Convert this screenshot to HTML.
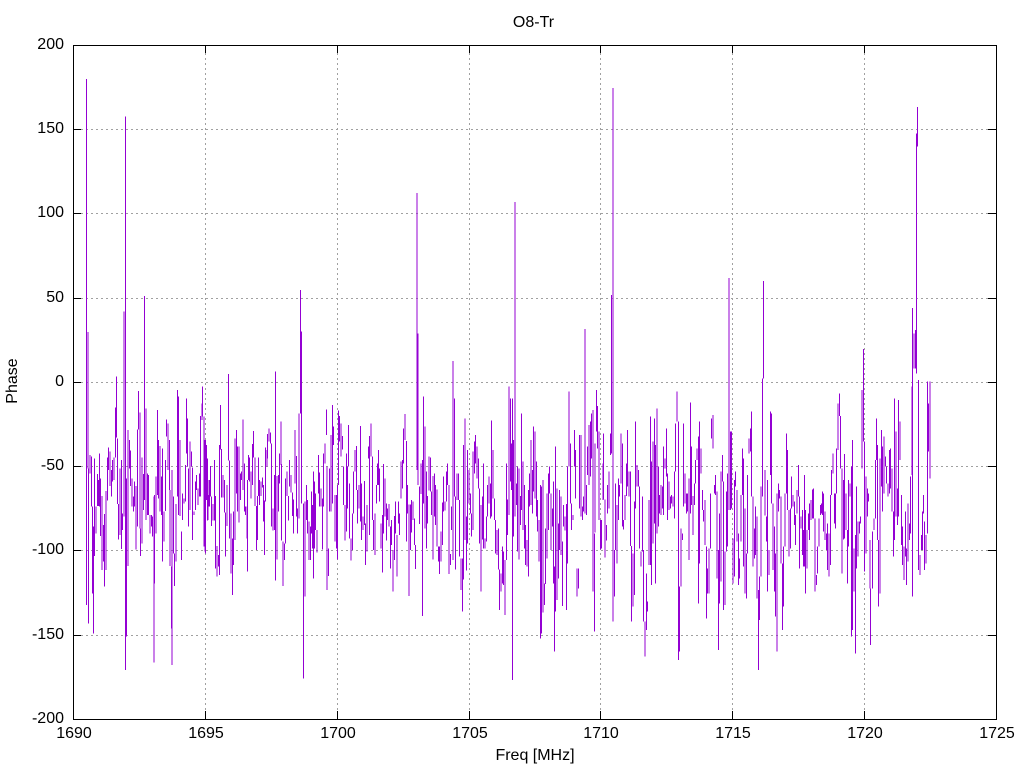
<!DOCTYPE html>
<html>
<head>
<meta charset="utf-8">
<title>O8-Tr</title>
<style>
html,body{margin:0;padding:0;background:#fff;width:1024px;height:768px;overflow:hidden}
svg{display:block}
text{font-family:"Liberation Sans",sans-serif;font-size:16px;fill:#000}
.d{fill:none;stroke:#9400d3;stroke-width:1.15;vector-effect:non-scaling-stroke}
</style>
</head>
<body>
<svg width="1024" height="768" viewBox="0 0 1024 768" xmlns="http://www.w3.org/2000/svg">
<rect width="1024" height="768" fill="#fff"/>
<g stroke="#a0a0a0" stroke-width="1" stroke-dasharray="2 3" fill="none" shape-rendering="crispEdges">
<path d="M81 129.5H988M81 213.5H988M81 298.5H988M81 382.5H988M81 466.5H988M81 550.5H988M81 635.5H988"/>
<path d="M205.5 53V711M337.5 53V711M469.5 53V711M600.5 53V711M732.5 53V711M864.5 53V711"/>
</g>
<g shape-rendering="crispEdges">
<g transform="translate(80,380) scale(.33333)"><path class="d" d="M19 -903V675M24 -144V265M26 265V730M30 225V280M34 230V380M38 380V640M40 440V760M44 235V528M48 380V460M52 282V378M56 300V378M58 220V380M62 295V468M66 348V570M70 435V545M74 402V620M78 333V570M82 232V362M86 202V270M90 215V318M94 270V350M98 240V305M102 232V300M106 82V232M110 -10V172M112 175V372M116 372V478M120 265V465M124 240V507M128 400V450M132 -205V410M136 -790V870M140 295V770M144 150V558M148 180V265M152 212V318M156 295V380M160 350V395M164 305V380M168 318V508M172 148V440M176 33V148M180 98V445M182 445V528M186 232V490M190 282V390M194 -252V360M198 85V420M202 280V405M206 285V405M210 405V460M214 405V440M218 410V470M222 350V848M224 345V610M228 290V460M232 90V345M236 180V355M240 198V395M244 290V405M248 205V545M252 395V485M256 240V393M260 118V170M264 130V270M268 180V330M270 330V558M274 560V745M276 270V855M280 350V520M284 520V618M288 372V545M292 30V350M296 50V405M300 180V408M304 455V540M308 340V420M312 355V370M316 255V365M320 55V220M322 115V260M326 265V440M330 185V390M334 215V260M338 262V480M342 395V405M346 305V390M350 285V330M354 325V375M358 280V350M362 108V350M366 70V120M368 20V110M372 110V500M376 180V520M380 235V360M384 345V420M388 300V380"/></g>
<g transform="translate(205,370) scale(.33333)"><path class="d" d="M0 210V545M4 225V265M8 265V452M12 330V410M16 288V380M20 380V468M24 402V452M28 270V452M32 378V595M36 528V620M40 555V590M44 225V615M46 105V238M50 237V382M54 315V382M58 330V428M62 428V560M66 345V468M70 12V272M74 272V505M78 430V610M82 505V675M86 425V585M90 205V510M94 180V370M98 230V425M102 230V458M106 310V390M110 305V330M114 148V360M118 280V425M122 410V435M126 410V505M128 330V605M130 255V330M134 262V335M138 305V385M142 222V345M146 183V262M150 262V408M154 408V540M158 378V510M160 262V378M164 330V405M168 335V378M172 322V352M176 345V455M178 392V555M182 232V395M186 240V290M188 192V265M192 175V215M196 188V220M200 220V470M204 415V482M208 315V480M212 5V632M216 318V568M220 315V425M224 250V340M228 155V285M230 282V512M234 515V648M238 520V570M242 325V520M246 305V378M250 378V452M254 270V350M258 315V368M262 368V438M266 388V490M270 180V340M274 258V440M278 415V490M282 130V445M286 -240V130M290 -115V400M296 400V925M300 395V680M304 345V450M308 390V490M312 455V570M316 470V570M320 365V490M322 405V535M326 305V625M328 335V535M332 370V480M336 480V548M340 255V370M344 308V410M348 355V410M352 385V538M356 250V410M360 220V280M364 118V195M366 290V660M370 535V618M374 295V425M378 195V425M382 105V400M386 170V225M390 375V515"/></g>
<g transform="translate(335,370) scale(.33333)"><path class="d" d="M0 385V455M4 375V535M8 345V568M10 122V345M14 138V215M18 160V260M22 198V238M26 290V405M30 405V512M34 250V485M38 290V415M40 165V290M44 340V505M48 505V572M52 430V540M56 305V430M60 240V305M64 228V360M68 360V460M72 345V415M76 168V455M80 340V510M84 440V480M88 333V465M92 460V585M96 405V545M100 230V265M104 198V495M108 160V260M112 260V450M116 450V540M120 430V555M124 345V400M128 280V345M130 240V345M134 295V395M138 460V535M142 435V608M146 282V490M150 325V440M154 400V512M158 415V450M162 402V470M166 470V595M170 450V525M174 540V665M178 438V570M182 395V490M186 495V620M190 395V460M194 430V495M198 275V385M202 270V355M206 175V280M210 132V210M214 213V515M218 345V430M222 403V678M226 403V540M230 390V488M234 395V450M238 445V525M242 525V597M246 -531V300M249 -110V345M254 350V462M258 280V372M262 270V738M266 80V400M270 170V475M274 305V535M278 378V460M282 260V362M286 262V365M290 365V435M294 318V568M298 310V440M302 345V465M306 358V530M310 530V575M314 530V612M318 485V575M322 397V525M326 320V425M330 395V422M334 305V395M338 280V345M342 345V612M346 552V585M350 410V480M354 -27V570M358 85V380M362 380V598M366 310V390M370 310V390M374 390V560M378 565V660M382 565V725M386 225V628M390 145V510"/></g>
<g transform="translate(465,370) scale(.33333)"><path class="d" d="M0 215V440M4 440V602M8 240V520M12 300V400M16 370V430M20 430V500M24 245V480M28 215V310M32 195V280M36 230V325M40 265V355M44 355V520M48 405V665M52 380V508M56 280V535M60 505V535M64 440V515M68 345V440M72 320V400M76 340V445M80 152V440M84 240V385M88 385V450M92 450V550M96 480V555M100 475V598M104 598V720M108 610V665M112 530V640M116 545V645M120 570V735M124 280V570M128 388V495M132 50V435M136 85V335M140 220V360M142 85V930M146 210V500M150 -504V440M154 340V405M158 290V545M162 295V568M166 378V465M170 130V420M174 275V480M178 345V535M182 465V585M186 510V590M190 360V620M194 310V410M198 210V405M202 300V430M206 170V365M210 185V385M214 275V440M218 390V485M222 450V575M226 345V805M230 350V790M234 330V728M238 640V705M242 475V642M246 370V565M250 310V480M254 290V370M258 370V540M262 415V470M266 335V640M268 590V845M272 230V725M276 355V690M280 460V625M284 360V540M288 380V555M292 515V708M296 405V470M300 440V482M304 402V720M308 290V580M312 65V290M316 220V400M320 400V480M324 435V450M328 180V290M332 240V385M336 595V680M340 595V655M344 195V415M348 195V440M352 410V450M356 380V425M360 -123V430M364 345V435M368 230V315M372 165V345M376 155V320M380 130V265M384 120V665M388 490V785"/></g>
<g transform="translate(595,370) scale(.33333)"><path class="d" d="M0 220V488M4 60V185M8 108V235M12 185V450M16 450V538M20 450V535M24 280V390M26 190V388M30 388V562M34 465V512M38 345V430M42 305V415M46 190V255M50 -225V250M54 -846V755M58 540V680M62 340V540M66 405V580M70 325V450M74 345V380M78 190V340M82 220V470M86 450V478M90 375V450M94 280V378M98 180V350M102 305V380M106 305V528M110 528V755M114 550V710M118 395V675M122 155V415M126 285V350M130 300V350M134 350V535M138 545V590M142 380V545M146 540V755M150 755V860M154 610V780M158 695V725M162 390V585M166 140V585M170 275V645M174 215V520M178 145V460M182 225V640M186 115V490M190 290V470M194 375V430M198 345V435M202 350V415M206 230V435M210 265V295M214 175V320M218 310V450M222 335V420M226 380V415M230 375V400M234 380V410M238 305V445M242 160V305M246 65V155M250 155V870M254 650V845M258 475V650M262 490V510M266 160V410M270 310V400M274 370V430M278 370V425M282 325V570M286 97V430M290 230V405M294 378V495M298 340V405M302 270V340M306 235V270M310 200V700M314 155V580M318 235V310M322 360V420M326 420V455M330 390V525M334 530V745M338 595V670M342 535V670M346 370V535M350 145V205M354 135V235M358 345V370M362 315V375M366 365V625M370 540V840M374 430V700M378 305V635M382 255V335M386 335V720M390 660V705"/></g>
<g transform="translate(725,370) scale(.33333)"><path class="d" d="M0 545V665M4 365V545M8 310V530M12 -276V420M16 185V420M20 185V415M24 505V640M28 330V620M32 305V350M36 360V515M40 490V645M44 565V625M48 375V515M52 235V375M56 265V590M60 415V670M64 550V685M68 315V550M72 205V250M76 175V245M80 125V380M84 380V590M88 475V565M92 410V555M96 440V685M100 660V900M104 620V750M108 350V620M112 25V380M116 -267V25M120 300V437M124 440V515M128 330V665M132 540V615M136 125V315M140 130V400M144 400V600M148 470V665M152 550V740M156 370V845M160 340V425M164 360V385M168 380V580M172 580V780M176 530V710M180 370V530M184 190V370M188 240V420M192 420V560M196 415V535M200 320V415M204 375V410M208 395V465M212 435V525M216 360V430M220 285V380M224 380V595M228 440V475M232 420V555M236 480V590M238 315V590M242 420V670M246 480V595M250 430V480M254 400V510M258 390V450M262 358V445M266 355V445M270 445V665M274 615V645M278 530V610M282 445V530M286 405V435M290 400V430M292 365V435M296 370V485M300 425V510M304 490V540M308 460V600M312 490V620M316 375V585M320 300V375M324 250V310M328 370V460"/></g>
<g transform="translate(830,340) scale(.33333)"><path class="d" d="M16 460V565M20 325V460M24 190V330M28 160V228M32 228V385M36 385V700M40 420V598M44 342V595M48 460V570M52 570V730M56 420V620M60 430V470M64 380V890M68 300V870M72 625V755M76 585V940M80 440V685M84 545V650M88 545V580M92 530V550M96 150V385M100 27V305M104 305V695M108 410V640M112 445V530M116 460V485M120 600V745M122 745V915M128 575V745M132 535V570M136 360V535M140 235V360M142 315V600M146 600V800M150 355V760M154 270V440M158 320V515M162 290V460M166 350V380M170 380V430M174 430V470M178 330V460M182 325V445M186 385V515M190 515V650M194 175V600M198 275V530M202 445V555M206 180V530M210 245V360M214 465V615M218 560V675M222 620V720M226 515V650M230 625V735M234 490V665M238 550V600M242 410V580M246 140V405M248 -96V770M252 -20V85M256 -30V85M260 -620V100M262 -699V-580M266 120V690M270 645V705M274 585V630M278 515V630M280 465V520M284 545V690M288 585V670M292 125V580M296 190V335M300 125V415"/></g>
</g>
<g stroke="#000" stroke-width="1" fill="none" shape-rendering="crispEdges">
<path d="M73.5 45.5H996.5V719.5H73.5Z"/>
<path d="M73 129.5H81M73 213.5H81M73 298.5H81M73 382.5H81M73 466.5H81M73 550.5H81M73 635.5H81"/>
<path d="M996 129.5H988M996 213.5H988M996 298.5H988M996 382.5H988M996 466.5H988M996 550.5H988M996 635.5H988"/>
<path d="M205.5 45V53M337.5 45V53M469.5 45V53M600.5 45V53M732.5 45V53M864.5 45V53"/>
<path d="M205.5 719V711M337.5 719V711M469.5 719V711M600.5 719V711M732.5 719V711M864.5 719V711"/>
</g>
<g text-anchor="end">
<text x="64" y="49">200</text>
<text x="64" y="133">150</text>
<text x="64" y="217">100</text>
<text x="64" y="302">50</text>
<text x="64" y="386">0</text>
<text x="64" y="470">-50</text>
<text x="64" y="554">-100</text>
<text x="64" y="639">-150</text>
<text x="64" y="723">-200</text>
</g>
<g text-anchor="middle">
<text x="74" y="738">1690</text>
<text x="206" y="738">1695</text>
<text x="338" y="738">1700</text>
<text x="470" y="738">1705</text>
<text x="601" y="738">1710</text>
<text x="733" y="738">1715</text>
<text x="865" y="738">1720</text>
<text x="997" y="738">1725</text>
<text x="535" y="760">Freq [MHz]</text>
<text x="533.5" y="27">O8-Tr</text>
<text transform="translate(17,381) rotate(-90)">Phase</text>
</g>
</svg>
</body>
</html>
